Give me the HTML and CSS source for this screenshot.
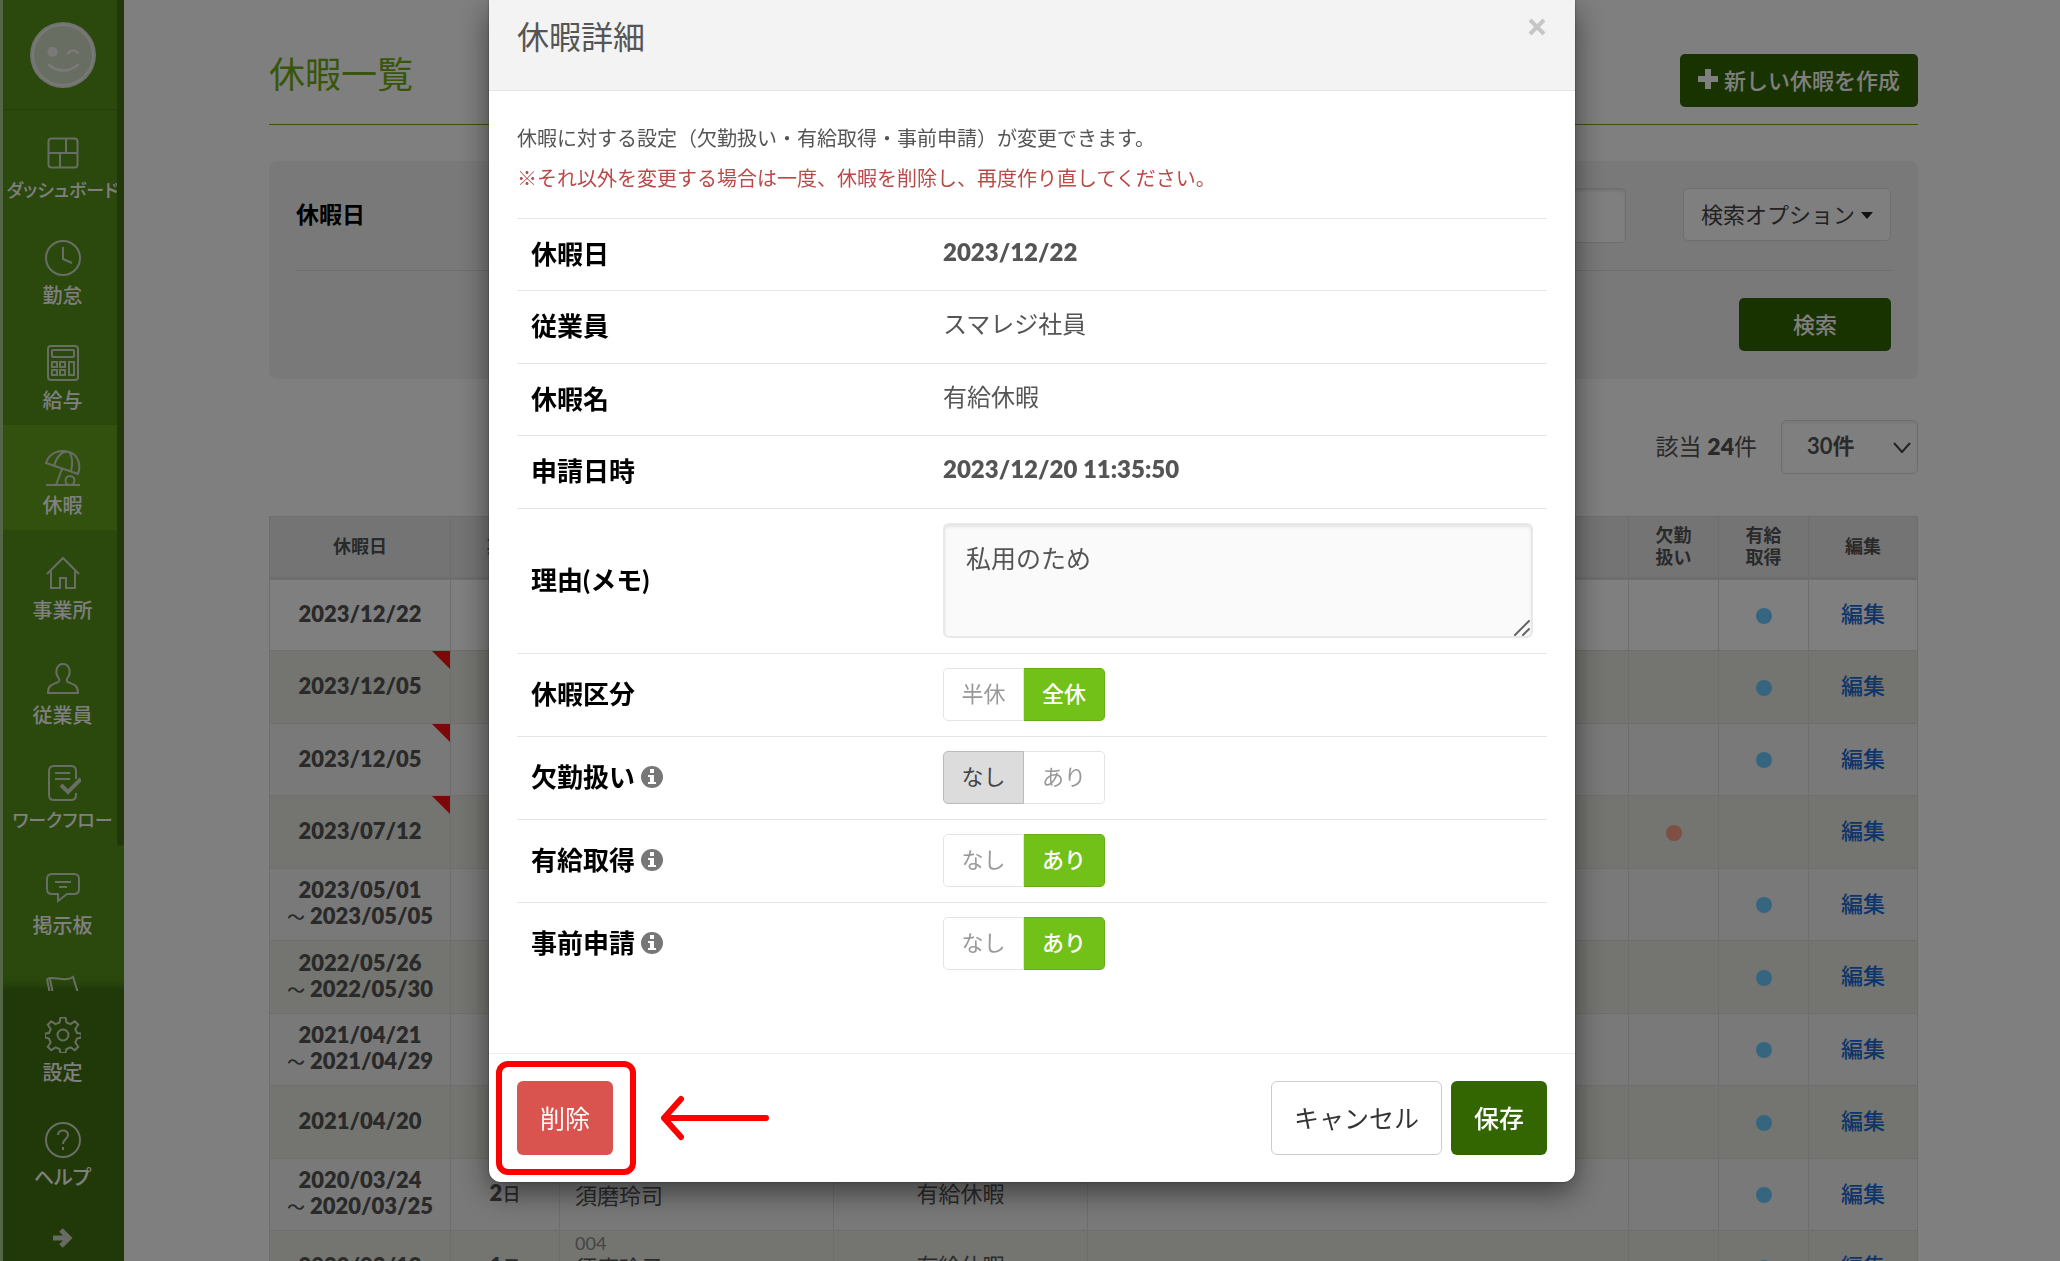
FILE: index.html
```html
<!DOCTYPE html>
<html lang="ja">
<head>
<meta charset="utf-8">
<meta name="viewport" content="width=device-width, initial-scale=1">
<title>休暇一覧</title>
<link rel="stylesheet" href="styles.css">
</head>
<body>
<div class="app">
  <nav class="sidebar">
    <div class="sidebar-main">
      <div class="avatar">
        <svg width="66" height="66" viewBox="0 0 66 66" fill="none"><circle cx="33" cy="33" r="33" fill="#e0e4dc"/><circle cx="33" cy="33" r="30" fill="#d2dcc4" stroke="#f0f0f0" stroke-width="2"/><circle cx="22.500" cy="30" r="5" fill="#f4f4f4"/><path d="M38 31q5-5 10 0M19 43q14 11 29 0" stroke="#f4f4f4" stroke-width="2.500" stroke-linecap="round"/></svg>
      </div>
      <a class="nav-item" href="#">
        <svg class="nav-icon" viewBox="0 0 36 36"><rect x="3.500" y="3.500" width="29" height="29" rx="3"/><path d="M3.500 18h29M21 3.500V18M15 18v14.500"/></svg>
        <span class="long">ダッシュボード</span>
      </a>
      <a class="nav-item" href="#">
        <svg class="nav-icon" viewBox="0 0 36 36"><circle cx="18" cy="18" r="17"/><path d="M18 7v12l9 4"/></svg>
        <span>勤怠</span>
      </a>
      <a class="nav-item" href="#">
        <svg class="nav-icon" viewBox="0 0 36 36"><rect x="3" y="1" width="30" height="34" rx="3"/><rect x="7" y="5" width="22" height="7" rx="1"/><path d="M7 17h5v5H7zM15 17h5v5h-5zM7 25h5v5H7zM15 25h5v5h-5zM24 17h5v13h-5z"/></svg>
        <span>給与</span>
      </a>
      <a class="nav-item is-active" href="#">
        <svg class="nav-icon" viewBox="0 0 36 36"><path d="M1 35h34M1 13C4 3 14-1 24 2s12 14 9 22zM9 16C12 6 17 1 24 2M26 21c2-8 1-15-2-19M17 19l-6 16"/><circle cx="25" cy="30.500" r="4.500"/></svg>
        <span>休暇</span>
      </a>
      <a class="nav-item" href="#">
        <svg class="nav-icon" viewBox="0 0 36 36"><path d="M2 19L18 3l16 16M6 16v17h9V23h6v10h9V16"/></svg>
        <span>事業所</span>
      </a>
      <a class="nav-item" href="#">
        <svg class="nav-icon" viewBox="0 0 36 36"><path d="M3 33c0-7 3-8 8-10 4-1 4-3 2-6-3-4-2-13 5-13s8 9 5 13c-2 3-2 5 2 6 5 2 8 3 8 10z"/></svg>
        <span>従業員</span>
      </a>
      <a class="nav-item" href="#">
        <svg class="nav-icon" viewBox="0 0 36 36"><path d="M31 14V6q0-5-5-5H9Q4 1 4 6v24q0 5 5 5h17q5 0 5-5v-2M10 8h15M10 14h15"/><path class="bold" d="M16 20l7 7 13-13"/></svg>
        <span class="long">ワークフロー</span>
      </a>
      <a class="nav-item" href="#">
        <svg class="nav-icon" viewBox="0 0 36 36"><path d="M7 4h22q5 0 5 5v10q0 5-5 5h-7l-9 7v-7H7q-5 0-5-5V9q0-5 5-5zM10 12h16M14 17h8"/></svg>
        <span>掲示板</span>
      </a>
      <a class="nav-item" href="#" aria-label="フラグ">
        <svg class="nav-icon" viewBox="0 0 36 36"><path d="M2 4c6-4 18 4 26-2l5 16M2 4l6 30M5 4l6 30"/></svg>
      </a>
      <div class="sidebar-scroll"></div>
    </div>
    <div class="sidebar-foot">
      <a class="nav-item" href="#">
        <svg class="nav-icon" viewBox="0 0 36 36"><circle cx="18" cy="18" r="5.500"/><path d="M15.500 0.500h5l1 5 4 1.700 4.300-2.900 3.400 3.400-2.900 4.300 1.700 4 4.500 0.500v4l-4.500 1-1.700 4 2.900 4.300-3.400 3.400-4.300-2.900-4 1.700-1 4h-5l-1-4-4-1.700-4.300 2.900-3.400-3.400 2.900-4.300-1.700-4-4-1v-4l4-0.500 1.700-4-2.900-4.300 3.400-3.400 4.300 2.900 4-1.700z"/></svg>
        <span>設定</span>
      </a>
      <a class="nav-item" href="#">
        <svg class="nav-icon" viewBox="0 0 36 36"><circle cx="18" cy="18" r="17"/><path d="M13 13c0-6 10-6 10 0 0 4-5 4-5 9M18 25v3"/></svg>
        <span>ヘルプ</span>
      </a>
      <button class="expand" type="button" aria-label="メニューを開く">
        <svg width="20" height="20" viewBox="0 0 20 20" fill="none" stroke="#d0d4cc" stroke-width="5"><path d="M0 10h16M8 2l8 8-8 8"/></svg>
      </button>
    </div>
  </nav>

  <main class="main">
    <header class="page-head">
      <h1>休暇一覧</h1>
      <button class="btn btn-green" type="button">
        <svg width="20" height="20" viewBox="0 0 20 20"><path d="M7 0h6v7h7v6h-7v7H7v-7H0V7h7z" fill="#fff"/></svg>
        新しい休暇を作成
      </button>
    </header>

    <form class="search">
      <div class="search-row">
        <label for="date">休暇日</label>
        <input class="search-input" id="date" type="text">
        <button class="btn btn-plain" type="button">検索オプション<span class="caret"></span></button>
      </div>
      <div class="search-actions">
        <button class="btn btn-green btn-search" type="button">検索</button>
      </div>
    </form>

    <div class="count-row">
      <span>該当 <b>24</b>件</span>
      <div class="select-wrap">
        <select aria-label="表示件数"><option>30件</option></select>
        <svg class="chevron" width="18" height="12" viewBox="0 0 18 12" fill="none" stroke="#444" stroke-width="2"><path d="M1 1l8 9 8-9"/></svg>
      </div>
    </div>

    <table class="list">
      <colgroup><col class="c-date"><col class="c-days"><col class="c-name"><col class="c-type"><col><col class="c-flag"><col class="c-flag"><col class="c-edit"></colgroup>
      <thead>
        <tr><th>休暇日</th><th>期間</th><th></th><th></th><th></th><th>欠勤<br>扱い</th><th>有給<br>取得</th><th>編集</th></tr>
      </thead>
      <tbody>
        <tr><td>2023/12/22</td><td></td><td></td><td></td><td></td><td></td><td><i class="dot"></i></td><td><a href="#">編集</a></td></tr>
        <tr><td class="flagged">2023/12/05</td><td></td><td></td><td></td><td></td><td></td><td><i class="dot"></i></td><td><a href="#">編集</a></td></tr>
        <tr><td class="flagged">2023/12/05</td><td></td><td></td><td></td><td></td><td></td><td><i class="dot"></i></td><td><a href="#">編集</a></td></tr>
        <tr><td class="flagged">2023/07/12</td><td></td><td></td><td></td><td></td><td><i class="dot dot-red"></i></td><td></td><td><a href="#">編集</a></td></tr>
        <tr><td>2023/05/01<br><small>〜</small> 2023/05/05</td><td></td><td></td><td></td><td></td><td></td><td><i class="dot"></i></td><td><a href="#">編集</a></td></tr>
        <tr><td>2022/05/26<br><small>〜</small> 2022/05/30</td><td></td><td></td><td></td><td></td><td></td><td><i class="dot"></i></td><td><a href="#">編集</a></td></tr>
        <tr><td>2021/04/21<br><small>〜</small> 2021/04/29</td><td></td><td></td><td></td><td></td><td></td><td><i class="dot"></i></td><td><a href="#">編集</a></td></tr>
        <tr><td>2021/04/20</td><td></td><td></td><td></td><td></td><td></td><td><i class="dot"></i></td><td><a href="#">編集</a></td></tr>
        <tr><td>2020/03/24<br><small>〜</small> 2020/03/25</td><td>2<small>日</small></td><td class="name"><span class="code">&nbsp;</span>須磨玲司</td><td class="type">有給休暇</td><td></td><td></td><td><i class="dot"></i></td><td><a href="#">編集</a></td></tr>
        <tr><td>2020/03/19</td><td>1<small>日</small></td><td class="name"><span class="code">004</span>須磨玲子</td><td class="type">有給休暇</td><td></td><td></td><td><i class="dot"></i></td><td><a href="#">編集</a></td></tr>
      </tbody>
    </table>
  </main>
</div>

<div class="backdrop">
  <div class="modal" role="dialog" aria-labelledby="modal-title">
    <header class="modal-head">
      <h2 id="modal-title">休暇詳細</h2>
      <button class="close" type="button" aria-label="閉じる"><svg width="18" height="18" viewBox="0 0 18 18" stroke="#c6c6c6" stroke-width="4"><path d="M2 2l14 14M16 2L2 16"/></svg></button>
    </header>
    <div class="modal-body">
      <p>休暇に対する設定（欠勤扱い・有給取得・事前申請）が変更できます。</p>
      <p class="warn">※それ以外を変更する場合は一度、休暇を削除し、再度作り直してください。</p>
      <table class="detail">
        <tr><th>休暇日</th><td><b>2023/12/22</b></td></tr>
        <tr><th>従業員</th><td>スマレジ社員</td></tr>
        <tr><th>休暇名</th><td>有給休暇</td></tr>
        <tr><th>申請日時</th><td><b>2023/12/20 11:35:50</b></td></tr>
        <tr><th><label for="memo">理由(メモ)</label></th><td>
          <div class="memo"><textarea id="memo">私用のため</textarea><svg class="grip" width="16" height="16" viewBox="0 0 16 16" stroke="#666" stroke-width="2" stroke-linecap="round"><path d="M1 15L15 1M9 15l6-6"/></svg></div></td></tr>
        <tr><th>休暇区分</th><td>
          <div class="toggle"><label><input type="radio" name="kind">半休</label><label class="green"><input type="radio" name="kind" checked>全休</label></div></td></tr>
        <tr><th><span class="with-info">欠勤扱い<svg class="info" viewBox="0 0 22 22"><circle cx="11" cy="11" r="11" fill="#777"/><path d="M9 3h4v4H9zM7 9h6v7h2v2H7v-2h2v-5H7z" fill="#fff"/></svg></span></th><td>
          <div class="toggle"><label class="gray"><input type="radio" name="absent" checked>なし</label><label><input type="radio" name="absent">あり</label></div></td></tr>
        <tr><th><span class="with-info">有給取得<svg class="info" viewBox="0 0 22 22"><circle cx="11" cy="11" r="11" fill="#777"/><path d="M9 3h4v4H9zM7 9h6v7h2v2H7v-2h2v-5H7z" fill="#fff"/></svg></span></th><td>
          <div class="toggle"><label><input type="radio" name="paid">なし</label><label class="green"><input type="radio" name="paid" checked>あり</label></div></td></tr>
        <tr><th><span class="with-info">事前申請<svg class="info" viewBox="0 0 22 22"><circle cx="11" cy="11" r="11" fill="#777"/><path d="M9 3h4v4H9zM7 9h6v7h2v2H7v-2h2v-5H7z" fill="#fff"/></svg></span></th><td>
          <div class="toggle"><label><input type="radio" name="prior">なし</label><label class="green"><input type="radio" name="prior" checked>あり</label></div></td></tr>
      </table>
    </div>
    <footer class="modal-foot">
      <div class="delete-wrap">
        <button class="btn-lg btn-danger" type="button">削除</button>
        <div class="highlight"></div>
        <svg class="arrow" width="110" height="46" viewBox="0 0 110 46" fill="none" stroke="#f00" stroke-width="6" stroke-linecap="round" stroke-linejoin="round"><path d="M106 23H4M21 4L4 23l17 19"/></svg>
      </div>
      <div class="foot-right">
        <button class="btn-lg btn-cancel" type="button">キャンセル</button>
        <button class="btn-lg btn-save" type="button">保存</button>
      </div>
    </footer>
  </div>
</div>
</body>
</html>
```
FILE: styles.css
```css
* { box-sizing: border-box; }
body {
  margin: 0;
  background: #fff;
  color: #555;
  font-family: Lato, "Noto Sans CJK JP", sans-serif;
  font-size: 22px;
}
button, input, select, textarea { font: inherit; color: inherit; }
button { cursor: pointer; }
h1, h2, p { margin: 0; font-weight: 400; }
b { font-weight: 800; }

.app { display: flex; height: 100vh; overflow: hidden; }

/* Sidebar */
.sidebar {
  flex: none;
  width: 124px;
  display: flex;
  flex-direction: column;
  background: #56901a;
  border-left: 3px solid #a8cc8c;
}
.sidebar-main { position: relative; flex: 1; overflow: hidden; padding-right: 7px; box-shadow: inset 0 -12px 10px -8px #3c6814; }
.sidebar-scroll { position: absolute; top: 0; right: 0; width: 7px; height: 846px; border-radius: 0 0 4px 4px; background: #447014; }
.avatar { height: 110px; padding: 22px 0 0 5px; display: flex; justify-content: center; align-items: flex-start; border-bottom: 1px solid #4c8014; }
.nav-item {
  height: 105px;
  padding: 25px 0 0 5px;
  display: flex;
  flex-direction: column;
  align-items: center;
  gap: 5px;
  color: #fff;
  text-decoration: none;
  font-size: 20px;
  line-height: 28px;
  white-space: nowrap;
  font-weight: 500;
  font-feature-settings: "palt";
}
.nav-item .long { font-size: 18px; }
.nav-item.is-active { background: #64a01c; }
.nav-icon { flex: none; width: 36px; height: 36px; fill: none; stroke: #d0dcc8; stroke-width: 2; }
.nav-icon .bold { stroke-width: 4; }
.sidebar-foot { flex: none; height: 270px; padding: 1px 7px 0 0; background: #427210; }
.expand { width: 100%; height: 74px; padding: 0 0 0 5px; border: 0; background: none; }

/* List page */
.main { flex: 1; min-width: 0; padding: 54px 142px 0 145px; }
.page-head { display: flex; justify-content: space-between; align-items: flex-start; height: 71px; border-bottom: 1px solid #70ac10; }
.page-head h1 { font-size: 36px; line-height: 40px; color: #70ac14; }
.btn {
  height: 53px;
  padding: 0 17px 3px;
  display: flex;
  align-items: center;
  justify-content: center;
  gap: 6px;
  border: 1px solid transparent;
  border-radius: 5px;
  font-size: 22px;
  white-space: nowrap;
}
.btn-green { background: #360; color: #fff; font-weight: 500; }
.btn-plain { background: #fff; border-color: #ddd; color: #444; width: 208px; }
.caret { margin-top: 4px; border: 6px solid transparent; border-top: 7px solid #222; border-bottom: 0; }
.search { margin-top: 36px; padding: 27px; height: 218px; border-radius: 8px; background: #f3f3f3; }
.search-row { display: flex; height: 83px; border-bottom: 1px solid #ddd; }
.search-row label { flex: 1; line-height: 53px; font-size: 23px; font-weight: 700; color: #000; }
.search-input { flex: none; width: 1000px; height: 55px; margin-right: 57px; border: 1px solid #ddd; border-radius: 5px; background: #fff; box-shadow: inset 0 2px 3px #e4e4e4; }
.search-actions { display: flex; justify-content: flex-end; padding-top: 27px; }
.btn-search { width: 152px; }
.count-row { display: flex; justify-content: flex-end; align-items: center; gap: 24px; margin-top: 40px; height: 55px; font-size: 23px; line-height: 28px; }
.count-row > span { padding-bottom: 2px; }
.select-wrap { position: relative; }
select { display: block; width: 137px; height: 54px; padding: 0 0 2px 25px; border: 1px solid #ddd; border-radius: 5px; background: #fff; box-shadow: inset 0 2px 3px #eee; appearance: none; font-size: 22px; font-weight: 700; }
.chevron { position: absolute; right: 7px; top: 22px; pointer-events: none; }

.list { width: 100%; margin-top: 42px; border-collapse: collapse; table-layout: fixed; }
.c-date { width: 181px; }
.c-days { width: 109px; }
.c-name { width: 274px; }
.c-type { width: 254px; }
.c-flag { width: 90px; }
.c-edit { width: 109px; }
.list th, .list td { padding: 0 0 2px; border: 1px solid #ddd; text-align: center; line-height: 26px; }
.list thead th { height: 62px; font-size: 18px; line-height: 22px; background: #e9e9e9; border-bottom: 3px solid #ddd; }
.list td { position: relative; height: 72px; font-weight: 800; }
.list tr:nth-child(odd) td { background: #f3f3f3; }
.list tr:first-child td { background: #fff; }
.list tr:nth-child(even) td { background: #e8ebe0; height: 73px; }
.list small { font-size: 18px; font-weight: 500; }
.list .name { padding-left: 15px; text-align: left; font-weight: 400; vertical-align: top; }
.list .type { font-weight: 400; }
.code { display: block; font-size: 18px; line-height: 24px; color: #888; }
.list a { color: #1b6ad4; text-decoration: none; font-weight: 500; }
.dot { display: block; width: 16px; height: 16px; margin: 3px auto 0; border-radius: 50%; background: #6cccff; }
.dot-red { background: #ff9c88; }
.flagged::after { content: ""; position: absolute; top: 0; right: 0; border-top: 18px solid #f81010; border-left: 18px solid transparent; }

/* Modal */
.backdrop { position: fixed; inset: 0; padding-left: 4px; background: rgba(0, 0, 0, .5); overflow: hidden; }
.modal { width: 1086px; max-width: 100%; margin: 0 auto; border-radius: 0 0 12px 12px; background: #fff; box-shadow: 0 10px 30px rgba(0, 0, 0, .5), 0 0 2px rgba(0, 0, 0, .5); }
.modal-head { display: flex; justify-content: space-between; align-items: flex-start; padding: 13px 28px 29px; background: #f3f3f3; border-bottom: 1px solid #e5e5e5; }
.modal-head h2 { font-size: 32px; line-height: 48px; }
.close { width: 20px; height: 28px; padding: 0; border: 0; background: none; }
.modal-body { padding: 27px 28px 68px; font-size: 20px; line-height: 40px; }
.warn { color: #b94a48; }
.detail { width: 100%; margin-top: 20px; border-collapse: collapse; table-layout: fixed; font-size: 24px; line-height: 32px; }
.detail th, .detail td { height: 72px; padding: 0 14px; border-top: 1px solid #e5e5e5; text-align: left; }
.detail tr:nth-child(even) > * { height: 73px; }
.detail th { width: 40%; padding-bottom: 2px; font-size: 26px; color: #000; }
.detail td { padding-bottom: 6px; }
.memo { position: relative; margin: 14px 0 9px; }
.memo textarea { display: block; width: 100%; height: 115px; padding: 16px 21px; border: 2px solid #e8e8e8; border-radius: 6px; background: #fafafa; box-shadow: inset 0 2px 3px #e4e4e4; font-size: 25px; line-height: 34px; resize: none; }
.grip { position: absolute; right: 3px; bottom: 2px; pointer-events: none; }
.with-info { display: flex; align-items: center; gap: 6px; }
.info { width: 22px; height: 22px; }
.toggle { display: flex; margin: 14px 0 9px; font-size: 22px; line-height: 49px; }
.toggle label { position: relative; width: 81px; height: 53px; border: 1px solid #e4e4e4; text-align: center; color: #999; }
.toggle label:first-child { border-radius: 5px 0 0 5px; }
.toggle label:last-child { border-left: 0; border-radius: 0 5px 5px 0; }
.toggle input { position: absolute; inset: 0; margin: 0; opacity: 0; }
.toggle .green { background: #72c118; border-color: #66ad15; color: #fff; font-weight: 500; }
.toggle .gray { background: #dcdcdc; border-color: #bbb; color: #444; }
.modal-foot { display: flex; justify-content: space-between; padding: 27px 28px; border-top: 1px solid #eee; }
.foot-right { display: flex; gap: 9px; }
.btn-lg { height: 74px; padding: 0 22px 2px; border: 1px solid transparent; border-radius: 6px; font-size: 25px; }
.btn-danger { background: #d9534f; color: #fff; }
.btn-cancel { background: #fff; border-color: #ccc; color: #333; }
.btn-save { background: #360; color: #fff; font-weight: 500; }
.delete-wrap { position: relative; }
.highlight { position: absolute; inset: -20px -23px -20px -21px; border: 6px solid #f00; border-radius: 12px; pointer-events: none; }
.arrow { position: absolute; left: 143px; top: 14px; pointer-events: none; }
```
